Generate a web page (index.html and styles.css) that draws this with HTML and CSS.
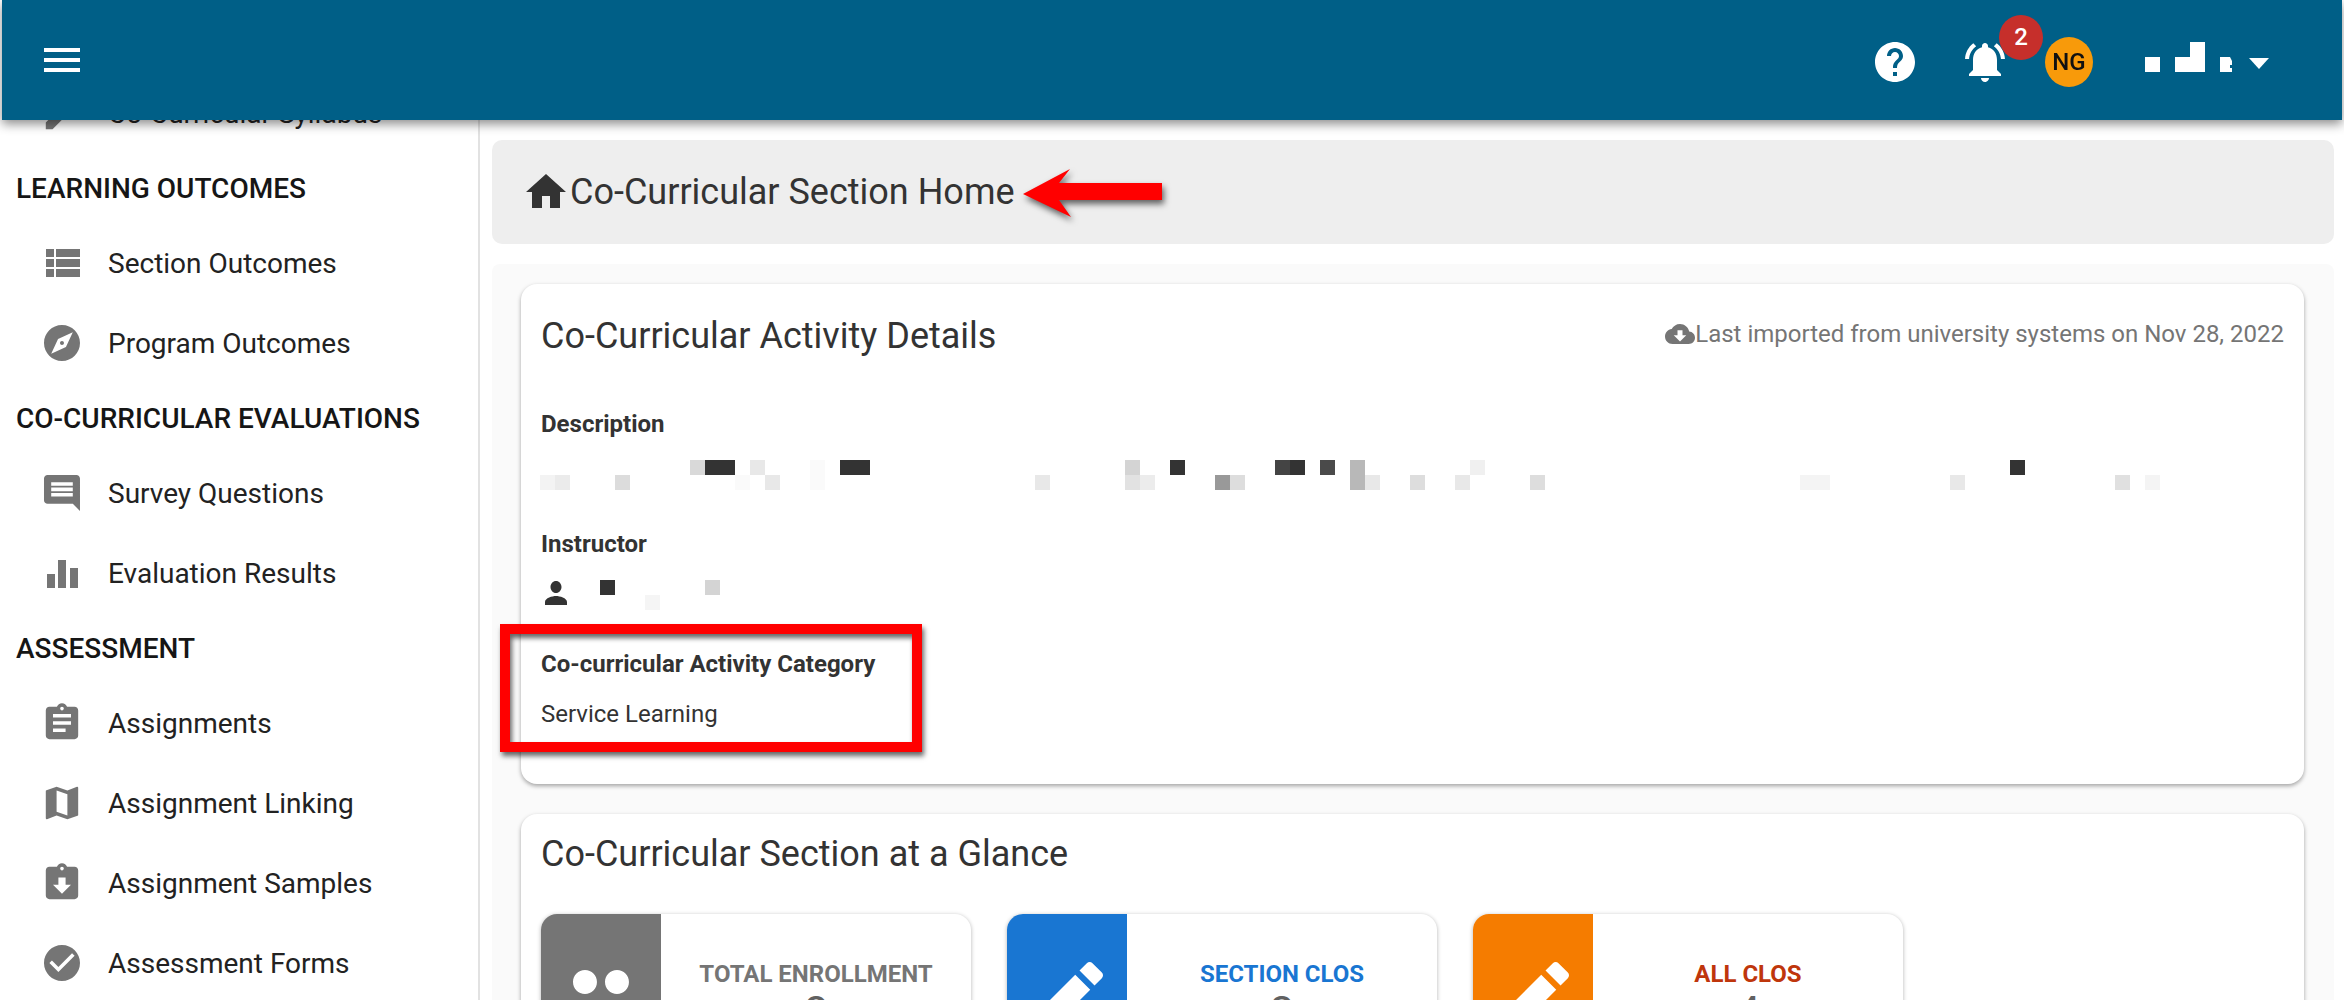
FILE: index.html
```html
<!DOCTYPE html>
<html>
<head>
  <meta charset="UTF-8">
  <title>Co-Curricular Section Home</title>
  <link rel="stylesheet" href="styles.css">
</head>
<body>
  <header class="topbar">
    <svg class="icon" viewBox="0 0 24 24"><path d="M3 18h18v-2H3v2zm0-5h18v-2H3v2zm0-7v2h18V6H3z"/></svg>
    <div class="tools">
      <svg class="icon" viewBox="0 0 24 24"><path d="M12 2C6.48 2 2 6.48 2 12s4.48 10 10 10 10-4.48 10-10S17.52 2 12 2zm1 17h-2v-2h2v2zm2.07-7.75l-.9.92C13.45 12.9 13 13.5 13 15h-2v-.5c0-1.1.45-2.1 1.17-2.83l1.24-1.26c.37-.36.59-.86.59-1.41 0-1.1-.9-2-2-2s-2 .9-2 2H8c0-2.21 1.79-4 4-4s4 1.79 4 4c0 .88-.36 1.68-.93 2.25z"/></svg>
      <div class="bell">
        <svg class="icon" viewBox="0 0 24 24"><path d="M7.58 4.08L6.15 2.65C3.75 4.48 2.17 7.3 2.03 10.5h2c.15-2.65 1.51-4.97 3.55-6.42zm12.39 6.42h2c-.15-3.2-1.73-6.02-4.12-7.85l-1.42 1.43c2.02 1.45 3.39 3.77 3.54 6.42zM18 11c0-3.07-1.64-5.64-4.5-6.32V4c0-.83-.67-1.5-1.5-1.5s-1.5.67-1.5 1.5v.68C7.63 5.36 6 7.92 6 11v5l-2 2v1h16v-1l-2-2v-5zm-6 11c.14 0 .27-.01.4-.04.65-.14 1.18-.58 1.44-1.18.1-.24.15-.5.15-.78h-4c.01 1.1.9 2 2.01 2z"/></svg>
        <span class="badge">2</span>
      </div>
      <div class="avatar">NG</div>
      <svg class="username" width="87" height="30" viewBox="0 0 87 30" fill="#fff"><rect x="0" y="15" width="15" height="15"/><rect x="30" y="15" width="15" height="15"/><rect x="45" y="0" width="15" height="30"/><path d="M75 15h10l2 4v4h-2v3h2v4H75z"/></svg>
      <span class="caret"></span>
    </div>
  </header>

  <nav class="sidebar">
    <a class="nav-item"><svg class="icon" viewBox="-1.33 -1.33 26.67 26.67"><path d="M3 17.25V21h3.75L17.81 9.94l-3.75-3.75L3 17.25zM20.71 7.04c.39-.39.39-1.02 0-1.41l-2.34-2.34c-.39-.39-1.02-.39-1.41 0l-1.83 1.83 3.75 3.75 1.83-1.83z"/></svg>Co-Curricular Syllabus</a>
    <h4 class="nav-head">LEARNING OUTCOMES</h4>
    <a class="nav-item"><svg class="icon" viewBox="0 0 24 24"><path d="M4 14h4v-4H4v4zm0 5h4v-4H4v4zM4 9h4V5H4v4zm5 5h12v-4H9v4zm0 5h12v-4H9v4zM9 5v4h12V5H9z"/></svg>Section Outcomes</a>
    <a class="nav-item"><svg class="icon" viewBox="-1.33 -1.33 26.67 26.67"><path d="M12 10.9c-.61 0-1.1.49-1.1 1.1s.49 1.1 1.1 1.1c.61 0 1.1-.49 1.1-1.1s-.49-1.1-1.1-1.1zM12 2C6.48 2 2 6.48 2 12s4.48 10 10 10 10-4.48 10-10S17.52 2 12 2zm2.19 12.19L6 18l3.81-8.19L18 6l-3.81 8.19z"/></svg>Program Outcomes</a>
    <h4 class="nav-head">CO-CURRICULAR EVALUATIONS</h4>
    <a class="nav-item"><svg class="icon" viewBox="-1.33 -1.33 26.67 26.67"><path d="M21.99 4c0-1.1-.89-2-1.99-2H4c-1.1 0-2 .9-2 2v12c0 1.1.9 2 2 2h14l4 4-.01-18zM18 14H6v-2h12v2zm0-3H6V9h12v2zm0-3H6V6h12v2z"/></svg>Survey Questions</a>
    <a class="nav-item"><svg class="icon" viewBox="0 0 48 48"><path d="M9 25h8v14H9zM20 11h8v28h-8zM32 19h8v20h-8z"/></svg>Evaluation Results</a>
    <h4 class="nav-head">ASSESSMENT</h4>
    <a class="nav-item"><svg class="icon" viewBox="-1.33 -1.33 26.67 26.67"><path d="M19 3h-4.18C14.4 1.84 13.3 1 12 1c-1.3 0-2.4.84-2.82 2H5c-1.1 0-2 .9-2 2v14c0 1.1.9 2 2 2h14c1.1 0 2-.9 2-2V5c0-1.1-.9-2-2-2zm-7 0c.55 0 1 .45 1 1s-.45 1-1 1-1-.45-1-1 .45-1 1-1zm2 14H7v-2h7v2zm3-4H7v-2h10v2zm0-4H7V7h10v2z"/></svg>Assignments</a>
    <a class="nav-item"><svg class="icon" viewBox="-1.33 -1.33 26.67 26.67"><path d="M20.5 3l-.16.03L15 5.1 9 3 3.36 4.9c-.21.07-.36.25-.36.48V20.5c0 .28.22.5.5.5l.16-.03L9 18.9l6 2.1 5.64-1.9c.21-.07.36-.25.36-.48V3.5c0-.28-.22-.5-.5-.5zM15 19l-6-2.11V5l6 2.11V19z"/></svg>Assignment Linking</a>
    <a class="nav-item"><svg class="icon" viewBox="-1.33 -1.33 26.67 26.67"><path d="M19 3h-4.18C14.4 1.84 13.3 1 12 1c-1.3 0-2.4.84-2.82 2H5c-1.1 0-2 .9-2 2v14c0 1.1.9 2 2 2h14c1.1 0 2-.9 2-2V5c0-1.1-.9-2-2-2zm-7 0c.55 0 1 .45 1 1s-.45 1-1 1-1-.45-1-1 .45-1 1-1zm0 15l-5-5h3V9h4v4h3l-5 5z"/></svg>Assignment Samples</a>
    <a class="nav-item"><svg class="icon" viewBox="-1.33 -1.33 26.67 26.67"><path d="M12 2C6.48 2 2 6.48 2 12s4.48 10 10 10 10-4.48 10-10S17.52 2 12 2zm-2 15l-5-5 1.41-1.41L10 14.17l7.59-7.59L19 8l-9 9z"/></svg>Assessment Forms</a>
  </nav>

  <main class="content">
    <div class="crumb">
      <svg class="icon" viewBox="0 0 24 24"><path d="M10 20v-6h4v6h5v-8h3L12 3 2 12h3v8z"/></svg>
      <h1>Co-Curricular Section Home</h1>
    </div>

    <div class="panel">
      <section class="card details">
        <div class="card-head">
          <h2>Co-Curricular Activity Details</h2>
          <div class="imported">
            <svg class="icon" viewBox="0 0 24 24"><path d="M19.35 10.04C18.67 6.59 15.64 4 12 4 9.11 4 6.6 5.64 5.35 8.04 2.34 8.36 0 10.91 0 14c0 3.31 2.69 6 6 6h13c2.76 0 5-2.24 5-5 0-2.64-2.05-4.78-4.65-4.96zM17 13l-5 5-5-5h3V9h4v4h3z"/></svg>
            Last imported from university systems on Nov 28, 2022
          </div>
        </div>

        <div class="field">
          <div class="field-label">Description</div>
          <svg class="redacted" width="1620" height="30" viewBox="0 0 1620 30">
            <rect x="0" y="15" width="15" height="15" fill="#f3f3f3"/>
            <rect x="15" y="15" width="15" height="15" fill="#ebebeb"/>
            <rect x="75" y="15" width="15" height="15" fill="#dcdcdc"/>
            <rect x="150" y="0" width="15" height="15" fill="#d9d9d9"/>
            <rect x="165" y="0" width="30" height="15" fill="#333"/>
            <rect x="210" y="0" width="15" height="15" fill="#e8e8e8"/>
            <rect x="195" y="15" width="15" height="15" fill="#fafafa"/>
            <rect x="225" y="15" width="15" height="15" fill="#e8e8e8"/>
            <rect x="270" y="0" width="15" height="15" fill="#fafafa"/>
            <rect x="270" y="15" width="15" height="15" fill="#fafafa"/>
            <rect x="300" y="0" width="30" height="15" fill="#333"/>
            <rect x="495" y="15" width="15" height="15" fill="#e8e8e8"/>
            <rect x="585" y="0" width="15" height="15" fill="#d4d4d4"/>
            <rect x="585" y="15" width="15" height="15" fill="#e2e2e2"/>
            <rect x="600" y="15" width="15" height="15" fill="#ececec"/>
            <rect x="630" y="0" width="15" height="15" fill="#333"/>
            <rect x="675" y="15" width="15" height="15" fill="#999"/>
            <rect x="690" y="15" width="15" height="15" fill="#ddd"/>
            <rect x="735" y="0" width="15" height="15" fill="#444"/>
            <rect x="750" y="0" width="15" height="15" fill="#333"/>
            <rect x="780" y="0" width="15" height="15" fill="#4a4a4a"/>
            <rect x="810" y="0" width="15" height="30" fill="#b8b8b8"/>
            <rect x="825" y="15" width="15" height="15" fill="#e8e8e8"/>
            <rect x="870" y="15" width="15" height="15" fill="#ddd"/>
            <rect x="915" y="15" width="15" height="15" fill="#e8e8e8"/>
            <rect x="930" y="0" width="15" height="15" fill="#f0f0f0"/>
            <rect x="990" y="15" width="15" height="15" fill="#ddd"/>
            <rect x="1260" y="15" width="30" height="15" fill="#f4f4f4"/>
            <rect x="1410" y="15" width="15" height="15" fill="#e8e8e8"/>
            <rect x="1470" y="0" width="15" height="15" fill="#333"/>
            <rect x="1575" y="15" width="15" height="15" fill="#e0e0e0"/>
            <rect x="1605" y="15" width="15" height="15" fill="#f4f4f4"/>
          </svg>
        </div>

        <div class="field">
          <div class="field-label">Instructor</div>
          <svg class="redacted" width="180" height="30" viewBox="0 0 180 30">
            <path transform="translate(-0.5,-5) scale(1.375,1.5)" fill="#333" d="M12 12c2.21 0 4-1.79 4-4s-1.79-4-4-4-4 1.79-4 4 1.79 4 4 4zm0 2c-2.67 0-8 1.34-8 4v2h16v-2c0-2.66-5.33-4-8-4z"/>
            <rect x="60" y="0" width="15" height="15" fill="#333"/>
            <rect x="105" y="15" width="15" height="15" fill="#f5f5f5"/>
            <rect x="165" y="0" width="15" height="15" fill="#d4d4d4"/>
          </svg>
        </div>

        <div class="field">
          <div class="field-label category">Co-curricular Activity Category</div>
          <div class="field-value">Service Learning</div>
        </div>
      </section>

      <section class="card glance">
        <h2>Co-Curricular Section at a Glance</h2>
        <div class="tiles">
          <div class="tile">
            <div class="tile-icon gray"><svg viewBox="0 0 24 24"><path d="M16 11c1.66 0 2.99-1.34 2.99-3S17.66 5 16 5c-1.66 0-3 1.34-3 3s1.34 3 3 3zm-8 0c1.66 0 2.99-1.34 2.99-3S9.66 5 8 5C6.34 5 5 6.34 5 8s1.34 3 3 3zm0 2c-2.33 0-7 1.17-7 3.5V19h14v-2.5c0-2.33-4.67-3.5-7-3.5zm8 0c-.29 0-.62.02-.97.05 1.16.84 1.97 1.97 1.97 3.45V19h6v-2.5c0-2.33-4.67-3.5-7-3.5z"/></svg></div>
            <div class="tile-text">
              <div class="tile-label gray-text">TOTAL ENROLLMENT</div>
              <div class="tile-value">8</div>
            </div>
          </div>
          <div class="tile">
            <div class="tile-icon blue"><svg viewBox="0 0 24 24"><path d="M3 17.25V21h3.75L17.81 9.94l-3.75-3.75L3 17.25zM20.71 7.04c.39-.39.39-1.02 0-1.41l-2.34-2.34c-.39-.39-1.02-.39-1.41 0l-1.83 1.83 3.75 3.75 1.83-1.83z"/></svg></div>
            <div class="tile-text">
              <div class="tile-label blue-text">SECTION CLOS</div>
              <div class="tile-value">3</div>
            </div>
          </div>
          <div class="tile">
            <div class="tile-icon orange"><svg viewBox="0 0 24 24"><path d="M3 17.25V21h3.75L17.81 9.94l-3.75-3.75L3 17.25zM20.71 7.04c.39-.39.39-1.02 0-1.41l-2.34-2.34c-.39-.39-1.02-.39-1.41 0l-1.83 1.83 3.75 3.75 1.83-1.83z"/></svg></div>
            <div class="tile-text">
              <div class="tile-label red-text">ALL CLOS</div>
              <div class="tile-value">4</div>
            </div>
          </div>
        </div>
      </section>
    </div>
  </main>

  <!-- annotations drawn on top of the screenshot -->
  <svg class="note-arrow" width="139" height="48" viewBox="0 0 139 48"><polygon points="0,25 47,0 36,14 139,14 139,31 36,31 48,48" fill="#ff0000"/></svg>
  <div class="note-box"></div>
</body>
</html>
```

FILE: styles.css
```css
html, body {
  height: 100%;
}
body {
  margin: 0;
  display: flex;
  height: 1000px;
  overflow: hidden;
  background-color: white;
  font-family: Roboto, "Liberation Sans", sans-serif;
  color: #333;
}
h1, h2, h4 {
  margin: 0;
  font-weight: 400;
}
.icon {
  width: 48px;
  height: 48px;
  flex: none;
  fill: currentColor;
}

/* top bar */
.topbar {
  position: fixed;
  top: 0;
  left: 2px;
  right: 2px;
  height: 120px;
  z-index: 5;
  display: flex;
  align-items: center;
  justify-content: space-between;
  padding: 0 73px 0 36px;
  background-color: #005f87;
  color: white;
  box-shadow: 0 4px 10px rgba(0, 0, 0, 0.45);
}
.tools {
  display: flex;
  align-items: center;
  padding-top: 4px;
}
.bell {
  position: relative;
  height: 48px;
  margin-left: 42px;
}
.badge {
  position: absolute;
  top: -23px;
  left: 38px;
  width: 44px;
  height: 45px;
  line-height: 45px;
  text-align: center;
  border-radius: 50%;
  background-color: #c62f2b;
  font-size: 24px;
  font-weight: 500;
}
.avatar {
  width: 48px;
  height: 50px;
  line-height: 50px;
  margin-left: 36px;
  text-align: center;
  border-radius: 50%;
  background-color: #f89a0a;
  color: #111;
  font-size: 24px;
  font-weight: 500;
}
.username {
  margin: 0 0 10px 52px;
}
.caret {
  margin: 3px 0 0 17px;
  border-left: 10px solid transparent;
  border-right: 10px solid transparent;
  border-top: 11px solid white;
}

/* left navigation */
.sidebar {
  flex: none;
  box-sizing: border-box;
  width: 480px;
  padding-top: 73px;
  border-right: 2px solid #e2e2e2;
}
.nav-head {
  height: 70px;
  line-height: 72px;
  padding-left: 16px;
  font-size: 28px;
  font-weight: 500;
  color: #161616;
  white-space: nowrap;
}
.nav-item {
  display: flex;
  align-items: center;
  gap: 22px;
  height: 80px;
  padding-left: 38px;
  font-size: 28px;
  color: #222;
}
.nav-item .icon {
  color: #757575;
}

/* main column */
.content {
  flex: 1;
  padding: 140px 10px 0 12px;
}
.crumb {
  display: flex;
  align-items: center;
  gap: 0;
  height: 104px;
  padding-left: 30px;
  border-radius: 10px;
  background-color: #eee;
}
.crumb h1 {
  font-size: 36px;
}
.panel {
  margin-top: 20px;
  padding: 20px 30px 0 29px;
  border-radius: 8px;
  background-color: #fafafa;
}
.card {
  box-sizing: border-box;
  padding: 0 20px;
  border-radius: 16px;
  background-color: white;
  box-shadow: 0 2px 4px rgba(0, 0, 0, 0.35);
}
.card h2 {
  font-size: 36px;
  line-height: 42px;
}
.details {
  height: 500px;
  padding-top: 31px;
}
.card-head {
  display: flex;
  align-items: center;
  justify-content: space-between;
  margin-bottom: 52px;
}
.imported {
  display: flex;
  align-items: center;
  margin-bottom: 4px;
  font-size: 24px;
  color: #757575;
}
.imported .icon {
  width: 30px;
  height: 30px;
}
.field {
  margin-bottom: 39px;
}
.field-label {
  margin-bottom: 21px;
  font-size: 24px;
  line-height: 30px;
  font-weight: 700;
}
.field-label.category {
  margin-bottom: 20px;
}
.field-value {
  font-size: 24px;
  line-height: 30px;
}
.redacted {
  display: block;
  margin-left: -1px;
}

/* at a glance */
.glance {
  margin-top: 30px;
  padding-top: 19px;
  height: 300px;
}
.tiles {
  display: flex;
  gap: 36px;
  margin-top: 39px;
}
.tile {
  display: flex;
  width: 430px;
  height: 168px;
  border-radius: 16px;
  overflow: hidden;
  background-color: white;
  box-shadow: 0 1px 4px rgba(0, 0, 0, 0.3);
}
.tile-icon {
  display: flex;
  align-items: center;
  justify-content: center;
  flex: none;
  width: 120px;
  fill: white;
}
.tile-icon svg {
  width: 96px;
  height: 96px;
}
.gray { background-color: #757575; }
.blue { background-color: #1976d2; }
.orange { background-color: #f57c00; }
.gray-text { color: #757575; }
.blue-text { color: #1976d2; }
.red-text { color: #bf360c; }
.tile-text {
  flex: 1;
  display: flex;
  flex-direction: column;
  justify-content: center;
  text-align: center;
}
.tile-label {
  font-size: 24px;
  line-height: 30px;
  font-weight: 700;
}
.tile-value {
  font-size: 44px;
  line-height: 48px;
  color: #616161;
}

/* red annotations */
.note-arrow {
  position: absolute;
  left: 1023px;
  top: 169px;
  z-index: 3;
  filter: drop-shadow(2px 4px 3px rgba(0, 0, 0, 0.6));
}
.note-box {
  position: absolute;
  left: 500px;
  top: 624px;
  width: 402px;
  height: 108px;
  z-index: 3;
  border: 10px solid #ff0000;
  box-shadow: 2px 4px 5px rgba(0, 0, 0, 0.6), inset 2px 4px 5px rgba(0, 0, 0, 0.6);
}
```
